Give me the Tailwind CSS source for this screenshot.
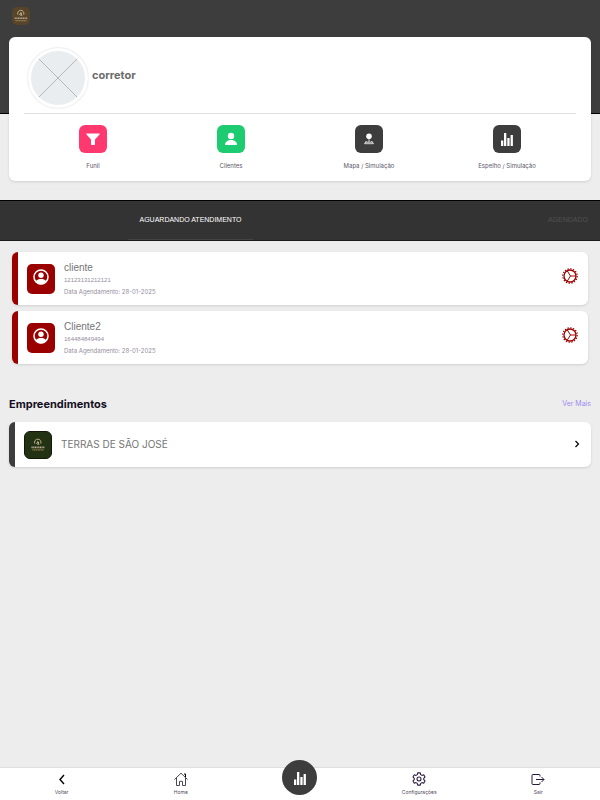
<!DOCTYPE html>
<html lang="pt-BR">
<head>
  <meta charset="UTF-8" />
  <meta name="viewport" content="width=device-width, initial-scale=1" />
  <title>Corretor | Início</title>
  <script src="https://cdn.jsdelivr.net/npm/@tailwindcss/browser@4"></script>
</head>
<body class="bg-[#ededed] font-[Inter,Arial,sans-serif] min-h-screen flex flex-col">

  <!-- Shared icons -->
  <svg class="hidden">
    <symbol id="logo" viewBox="0 0 28 28">
      <path d="M10.500 12.500a3.500 3.500 0 1 1 6.500 0M12 12.500l2-2 1 3M14 10v4" fill="none" stroke="#c9b78f" stroke-width="1" />
      <path d="M7 16.500h14" stroke="#b5ab93" stroke-width="1.800" stroke-dasharray="1.300 .5" />
      <path d="M8 19.200h12" stroke="#a08a50" stroke-width="1.500" stroke-dasharray="1.200 .6" />
    </symbol>
    <symbol id="bars" viewBox="0 0 14 14">
      <path d="M1 8.500h2.300V14H1zM4 1h2.300v13H4zM7.300 6h2.300v8H7.300zM10.600 3h2.300v11h-2.300z" fill="currentColor" />
    </symbol>
    <symbol id="user-circle" viewBox="0 0 16 16">
      <circle cx="8" cy="8" r="7" fill="none" stroke="currentColor" stroke-width="1.500" />
      <circle cx="8" cy="6.300" r="2.700" fill="currentColor" />
      <path d="M2.500 12.500C4 10.400 6 10 8 10s4 .4 5.500 2.500C12 14.500 10 15.300 8 15.300s-4-.8-5.500-2.800z" fill="currentColor" />
    </symbol>
    <symbol id="cog" viewBox="0 0 16 16">
      <circle cx="8" cy="8" r="7.200" fill="none" stroke="currentColor" stroke-width="1.200" stroke-dasharray="1.400 1.427" />
      <circle cx="8" cy="8" r="6" fill="none" stroke="currentColor" stroke-width="1.300" />
      <path d="M8.500 8H14M8.500 8 5.200 2.800M8.500 8 5.200 13.200" fill="none" stroke="currentColor" stroke-width="1" />
    </symbol>
  </svg>

  <!-- Header -->
  <header class="bg-[#3d3d3d] border-b border-black h-[114px] px-3 pt-[7px]">
    <a href="#" aria-label="Terras de São José" class="block size-[18px] rounded-[5px] bg-[#57452b]">
      <svg viewBox="4 4 20 20" class="size-[18px]"><use href="#logo" width="28" height="28" /></svg>
    </a>
  </header>

  <main class="grow pb-10">
    <!-- Profile card -->
    <section class="relative bg-white rounded-md shadow-sm mx-[9px] -mt-[77px] px-[15px] pt-[11px] pb-[10px]">
      <div class="flex items-center gap-1 border-b border-[#dfdfdf] pb-[5px] pl-1">
        <div class="size-[60px] rounded-full border-[3px] border-white bg-[#e9edef] shadow-[0_0_2px_#0003]">
          <svg viewBox="0 0 54 54" class="w-full" fill="none" stroke="#b5b9bb" stroke-width="1"><path d="M8 8l38 38M46 8 8 46" /></svg>
        </div>
        <h1 class="text-[11px] font-bold text-[#6c6c6c] leading-4 pb-[6px]">corretor</h1>
      </div>
      <div class="grid grid-cols-4 pt-[11px] text-[6px] leading-[10px] text-[#5a5766] text-center">
        <a href="#" class="flex flex-col items-center gap-2">
          <span class="size-7 rounded-md bg-[#ff396f] text-white flex items-center justify-center">
            <svg viewBox="0 0 14 14" class="size-[14px]" fill="currentColor"><path d="M.8 1.500h12.400c.5 0 .6.500.3.900L9 7.500V12c0 .6-.5 1-1 1H6c-.5 0-1-.4-1-1V7.500L.5 2.400c-.3-.4-.2-.9.300-.9z" /></svg>
          </span>
          Funil
        </a>
        <a href="#" class="flex flex-col items-center gap-2">
          <span class="size-7 rounded-md bg-[#1dcc70] text-white flex items-center justify-center">
            <svg viewBox="0 0 14 14" class="size-[14px]" fill="currentColor"><circle cx="7" cy="4" r="3.200" /><path d="M1 13c0-3.500 3-5 6-5s6 1.500 6 5z" /></svg>
          </span>
          Clientes
        </a>
        <a href="#" class="flex flex-col items-center gap-2">
          <span class="size-7 rounded-md bg-[#3d3d3d] text-white flex items-center justify-center">
            <svg viewBox="0 0 14 14" class="size-[14px]"><circle cx="7" cy="4.300" r="2.800" fill="currentColor" /><path d="M7 5v5M4.500 9 2.500 11.700h9L9.500 9M3.500 10.200h7" fill="none" stroke="currentColor" stroke-width=".8" /></svg>
          </span>
          Mapa / Simulação
        </a>
        <a href="#" class="flex flex-col items-center gap-2">
          <span class="size-7 rounded-md bg-[#3d3d3d] text-white flex items-center justify-center">
            <svg class="size-[14px]"><use href="#bars" /></svg>
          </span>
          Espelho / Simulação
        </a>
      </div>
    </section>

    <!-- Tabs -->
    <div class="mt-[19px] bg-[#333] border-t border-t-black border-b border-b-[#1c1c1c] h-[41px] flex items-stretch justify-between pl-32 pr-3 font-['Liberation_Sans',Arial,sans-serif] text-[7px] leading-2">
      <button class="w-[125px] text-center text-white border-b border-[#444]">AGUARDANDO ATENDIMENTO</button>
      <button class="text-[#515151] border-b border-transparent">AGENDADO</button>
    </div>

    <!-- Clients -->
    <section class="flex flex-col gap-[6px] px-3 pt-[11px]">
      <article class="flex items-center bg-white rounded-md border-l-[6px] border-[#9b0000] shadow-sm h-[53px] pl-[9px] pr-[10px]">
        <div class="w-7 h-[30px] rounded-[5px] bg-[#9b0000] text-white flex items-center justify-center">
          <svg class="size-4 mb-[3px]"><use href="#user-circle" /></svg>
        </div>
        <div class="grow pl-[9px] text-[6px] leading-[11px] text-[#958d9e]">
          <h2 class="font-['Liberation_Sans',Arial,sans-serif] text-[10px] leading-[14px] text-[#757575]">cliente</h2>
          <p class="font-['Liberation_Sans',Arial,sans-serif]">12123131212121</p>
          <p>Data Agendamento: 28-01-2025</p>
        </div>
        <button aria-label="Configurar cliente" class="text-[#9b0000] mb-[6px]"><svg class="size-4"><use href="#cog" /></svg></button>
      </article>
      <article class="flex items-center bg-white rounded-md border-l-[6px] border-[#9b0000] shadow-sm h-[53px] pl-[9px] pr-[10px]">
        <div class="w-7 h-[30px] rounded-[5px] bg-[#9b0000] text-white flex items-center justify-center">
          <svg class="size-4 mb-[3px]"><use href="#user-circle" /></svg>
        </div>
        <div class="grow pl-[9px] text-[6px] leading-[11px] text-[#958d9e]">
          <h2 class="font-['Liberation_Sans',Arial,sans-serif] text-[10px] leading-[14px] text-[#757575]">Cliente2</h2>
          <p class="font-['Liberation_Sans',Arial,sans-serif]">164484849494</p>
          <p>Data Agendamento: 28-01-2025</p>
        </div>
        <button aria-label="Configurar Cliente2" class="text-[#9b0000] mb-[6px]"><svg class="size-4"><use href="#cog" /></svg></button>
      </article>
    </section>

    <!-- Developments -->
    <section class="px-[9px] pt-8">
      <div class="flex items-center justify-between">
        <h2 class="text-[11px] leading-4 font-bold text-[#141021]">Empreendimentos</h2>
        <a href="#" class="text-[7px] leading-4 text-[#a08cf0]">Ver Mais</a>
      </div>
      <a href="#" class="mt-[10px] flex items-center bg-white rounded-md border-l-[6px] border-[#3d3d3d] shadow-sm h-[45px] pl-[9px] pr-[10px]">
        <svg class="size-7 rounded-md bg-[#243214] border border-[#101808]"><use href="#logo" /></svg>
        <span class="grow pl-[9px] pb-[2px] text-[10px] leading-4 text-[#757575]">TERRAS DE SÃO JOSÉ</span>
        <svg viewBox="0 0 8 8" class="size-2 mb-[2px]" fill="none" stroke="#000" stroke-width="1.200"><path d="M2.500 1 5.500 4 2.500 7" /></svg>
      </a>
    </section>
  </main>

  <!-- Bottom menu -->
  <nav class="sticky bottom-0 bg-white border-t border-[#dfe0e3] h-[33px] px-[2px] grid grid-cols-5 text-[5px] leading-[6px] text-[#4d4759] text-center">
    <a href="#" class="flex flex-col items-center gap-[3px] pt-1">
      <svg viewBox="0 0 14 14" class="size-[14px]" fill="none" stroke="#000" stroke-width="1.400"><path d="M9 3 5 7.500 9 12" /></svg>
      Voltar
    </a>
    <a href="#" class="flex flex-col items-center gap-[3px] pt-1">
      <svg viewBox="0 0 14 14" class="size-[14px]" fill="none" stroke="#4b4754" stroke-width="1"><path d="M.5 7.500 7 1.200l6.500 6.300M2.500 6v7.500h3V9.300h3v4.200h3V6" /><path d="M10 2h1.500v3" stroke="#000" /></svg>
      Home
    </a>
    <a href="#" aria-label="Espelho" class="flex justify-center">
      <span class="size-[35px] -mt-2 shrink-0 rounded-full bg-[#3d3d3d] text-white flex items-center justify-center">
        <svg class="size-[14px]"><use href="#bars" /></svg>
      </span>
    </a>
    <a href="#" class="flex flex-col items-center gap-[3px] pt-1">
      <svg viewBox="0 0 24 24" class="size-[14px]" fill="none" stroke="#27173e" stroke-width="1.800"><circle cx="12" cy="12" r="3.400" /><path d="M9.800 1.500h4.400l.7 3 2.200 1.300 3-.9 2.200 3.800-2.200 2.100v2.400l2.200 2.100-2.200 3.800-3-.9-2.200 1.300-.7 3H9.800l-.7-3-2.200-1.300-3 .9-2.200-3.800 2.200-2.100v-2.400L1.700 8.700l2.200-3.800 3 .9 2.200-1.300z" stroke-linejoin="round" /></svg>
      Configurações
    </a>
    <a href="#" class="flex flex-col items-center gap-[3px] pt-1">
      <svg viewBox="0 0 14 14" class="size-[14px]" fill="none" stroke="#27173e" stroke-width="1"><path d="M9 4.500V3.500a1 1 0 0 0-1-1H2a1 1 0 0 0-1 1v8a1 1 0 0 0 1 1h6a1 1 0 0 0 1-1v-1M5 7.500h8M10.500 5 13 7.500 10.500 10" /></svg>
      Sair
    </a>
  </nav>

</body>
</html>
